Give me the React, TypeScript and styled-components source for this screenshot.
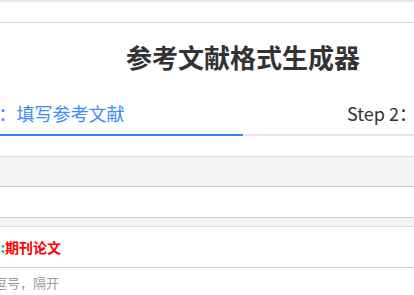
import React from "react"
import styled, { createGlobalStyle } from "styled-components"

const GlobalStyle = createGlobalStyle`
  html, body {
    margin: 0;
    padding: 0;
    overflow: hidden;
    background: #fff;
    font-family: "Noto Sans CJK SC", "Noto Sans", sans-serif;
    color: #333;
  }
`

const NavShadow = styled.div`
  height: 3px;
  background: linear-gradient(#d9d9d9, #f4f4f4 60%, #fff);
`

const Divider = styled.div`
  height: 1px;
  margin-top: 19px;
  background: #dcdcdc;
`

const Page = styled.div`
  width: 822px;
  margin-left: -168px;
`

const Title = styled.h1`
  margin: 16px 0 0;
  font-size: 26px;
  line-height: 36px;
  font-weight: 700;
  text-align: center;
  color: #333;
`

const Tabs = styled.div`
  display: flex;
  margin-top: 25px;
`

const Tab = styled.div<{ $active?: boolean }>`
  box-sizing: border-box;
  width: 50%;
  flex: none;
  white-space: nowrap;
  overflow: hidden;
  font-size: 18px;
  line-height: 26px;
  padding-bottom: 8px;
  text-align: ${(p) => (p.$active ? "center" : "left")};
  padding-right: ${(p) => (p.$active ? "4px" : "0")};
  padding-left: ${(p) => (p.$active ? "0" : "104px")};
  color: ${(p) => (p.$active ? "#3d8af7" : "#333")};
  border-bottom: 2px solid ${(p) => (p.$active ? "#3383f5" : "#e6e6e6")};
`

const Panel = styled.div`
  margin-top: 20px;
  border-top: 1px solid #dcdcdc;
`

const PanelHead = styled.div`
  height: 29px;
  background: #f4f4f4;
  border-bottom: 1px solid #cccccc;
`

const PanelBody = styled.div`
  height: 30px;
  border-bottom: 1px solid #cccccc;
`

const Strip = styled.div`
  height: 8px;
  background: #f4f4f4;
  border-bottom: 1px solid #dcdcdc;
`

const Row = styled.div`
  display: flex;
  align-items: center;
  height: 40px;
  padding-left: 53px;
  border-bottom: 1px solid #cccccc;
  font-size: 14px;
`

const Label = styled.span`
  width: 120px;
  text-align: right;
  color: #17a2b8;
  font-weight: 700;
`

const Value = styled.span`
  color: #ff0000;
  font-weight: 700;
`

const Hint = styled.div`
  padding-left: 84px;
  font-size: 13px;
  line-height: 30px;
  color: #999;
`

const App: React.FC = () => {
  return (
    <>
      <GlobalStyle />
      <NavShadow />
      <Divider />
      <Page>
        <Title>参考文献格式生成器</Title>
        <Tabs>
          <Tab $active>Step 1：填写参考文献</Tab>
          <Tab>Step 2：生成参考文献格式</Tab>
        </Tabs>
        <Panel>
          <PanelHead />
          <PanelBody />
          <Strip />
          <Row>
            <Label>文献类型:</Label>
            <Value>期刊论文</Value>
          </Row>
          <Hint>多个作者请用逗号，隔开</Hint>
        </Panel>
      </Page>
    </>
  )
}

export default App
